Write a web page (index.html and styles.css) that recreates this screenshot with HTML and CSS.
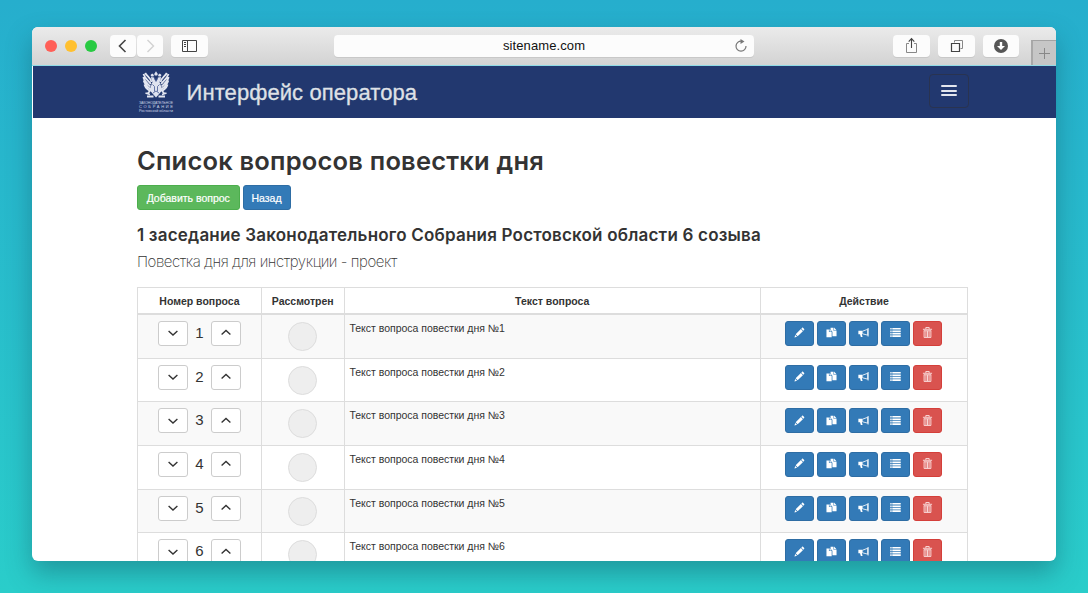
FILE: index.html
```html
<!DOCTYPE html>
<html lang="ru">
<head>
<meta charset="utf-8">
<title>Интерфейс оператора</title>
<link rel="stylesheet" href="styles.css">
</head>
<body>
<svg class="sprite" width="0" height="0" aria-hidden="true">
  <symbol id="down" viewBox="0 0 12 12"><path d="M1.600 4l4.400 4 4.400-4" fill="none" stroke="#333" stroke-width="1.4"/></symbol>
  <symbol id="up" viewBox="0 0 12 12"><path d="M1.600 7.500l4.400-4 4.400 4" fill="none" stroke="#333" stroke-width="1.4"/></symbol>
  <symbol id="pencil" viewBox="0 0 12 12"><path d="M.5 11.500l.8-2.800 2 2zM1.800 8l5.700-5.700 2.200 2.200L4 10.200zM8 1.800l.9-.9c.3-.3.6-.3.9 0L11.100 2.200c.3.3.3.6 0 .9l-.9.9z" fill="#fff"/></symbol>
  <symbol id="copy" viewBox="0 0 12 12"><path d="M.5 2.600h2.700v2.900h3V11.300H.5zM3.800 2.200l2.300 2.600H3.800zM5 .8h3.200v3.400h3.300V10H7V5.200L5 3zM8.800.6l2.700 2.900H8.800z" fill="#fff"/></symbol>
  <symbol id="horn" viewBox="0 0 12 12"><path d="M.4 4.200h4v3.600h-.2l.8 3H3.100L2.200 7.800H.4zM10.500 1.200h1v9.200h-1z" fill="#fff"/><path d="M4.600 4.700L10.600 2.500v6.400L4.600 7.300z" fill="none" stroke="#fff" stroke-width=".9"/></symbol>
  <symbol id="list" viewBox="0 0 12 12"><path d="M.3 1h1.500v1.800H.3zM2.500 1h9.200v1.800H2.500zM.3 3.700h1.500v1.800H.3zM2.500 3.700h9.200v1.800H2.500zM.3 6.400h1.500v1.800H.3zM2.500 6.400h9.200v1.800H2.500zM.3 9.100h1.500v1.800H.3zM2.500 9.100h9.200v1.800H2.500z" fill="#fff"/></symbol>
  <symbol id="trash" viewBox="0 0 12 12"><path d="M1 2.500h10M4.200 2.100V.5h3.600v1.600M2.300 4v7.400h7.400V4M4.300 4.400v6.600M6 4.400v6.600M7.700 4.400v6.600M2 4.100h8" fill="none" stroke="#fbe3e2" stroke-width="1"/></symbol>
</svg>

<div class="window">
  <div class="toolbar">
    <span class="dot red"></span><span class="dot yellow"></span><span class="dot green"></span>
    <div class="tool back"><svg width="26" height="22"><path d="M15.500 5l-6 6 6 6" fill="none" stroke="#444" stroke-width="1.6"/></svg></div>
    <div class="tool forward"><svg width="26" height="22"><path d="M10.500 5l6 6-6 6" fill="none" stroke="#d2d2d2" stroke-width="1.4"/></svg></div>
    <div class="tool sidebar"><svg width="37" height="22"><path d="M11.500 5.500h14v11h-14zM16.500 5.500v11M13 7.500h2M13 9.500h2M13 11.500h2" fill="none" stroke="#444"/></svg></div>
    <div class="address"><span class="url">sitename.com</span>
      <svg class="reload" width="14" height="14"><path d="M7.500 2.200A5 5 0 1 0 12 7" fill="none" stroke="#777" stroke-width="1.2"/><path d="M6.500 0l4 2.500-4 2.400z" fill="#777"/></svg>
    </div>
    <div class="tool share"><svg width="37" height="22"><path d="M16 8.500h-2.500v9h10v-9H21" fill="none" stroke="#888"/><path d="M18.500 13V4M15.700 6.600l2.800-3 2.800 3" fill="none" stroke="#444" stroke-width="1.1"/></svg></div>
    <div class="tool tabs"><svg width="37" height="22"><path d="M16.500 7.500v-2h8v8h-2" fill="none" stroke="#888"/><path d="M13.500 8.500h8v8h-8z" fill="none" stroke="#444" stroke-width="1.2"/></svg></div>
    <div class="tool download"><svg width="36" height="22"><circle cx="18" cy="11" r="7" fill="#555"/><path d="M16.800 7h2.400v4H22l-4 4-4-4h2.800z" fill="#fff"/></svg></div>
    <div class="newtab"><svg width="24" height="24"><path d="M11.500 7v11M6 12.500h11" stroke="#888" fill="none"/></svg></div>
  </div>

  <div class="navbar">
    <div class="crest">
      <svg width="28" height="28" viewBox="0 0 28 28">
        <g fill="#dfe3ef"><path d="M12.200 3l1.800-2.700L15.800 3l-.6 1.500h-2.400zM8.500 4l1.700-1.500L12 4l-.6 1.500H9.300zM16 4l1.800-1.500L19.500 4l-.8 1.500h-2.100z"/>
        <path d="M9 6l3 .5 1 3h2l1-3 3-.5-.5 3-1 2 3 8-3 3.500-3.500 4-3.500-4-3-3.500 3-8-1-2z"/></g>
        <path d="M9.500 11C9 7 5 5.500 3.200 2M8.800 13C7 10 3 8 1.500 3M8.400 15.500C6 13 2.300 11 1.400 6M8.400 18C5.600 16 3 14 1.700 9.500M8.200 20C6.400 19 3.600 17.500 2.500 13.500M18.500 11c.5-4 4.500-5.500 6.300-9M19.200 13c1.800-3 5.800-5 7.300-10M19.600 15.500c2.400-2.500 6.100-4.500 7-9.500M19.600 18c2.800-2 5.400-4 6.700-8.500M19.800 20c1.800-1 4.600-2.500 5.700-6.500M8.500 19l-3 4M19.500 19l3 4M3.500 22l4.500 1.500M24.500 22L20 23.500M5 25.500h6.500M16.500 25.500H23" stroke="#e3e6f0" stroke-width="1.800" fill="none"/>
        <path d="M12.500 6.500l1.500 4 1.500-4M10.500 13.500l2 2v5M17.500 13.500l-2 2v5M11 22l3-2 3 2" stroke="#465a93" stroke-width=".8" fill="none"/>
      </svg>
      <svg class="motto" width="39" height="18" viewBox="0 0 39 18">
        <text x="2" y="7.300" textLength="34" lengthAdjust="spacingAndGlyphs">ЗАКОНОДАТЕЛЬНОЕ</text>
        <text x="2" y="11.300" textLength="34">СОБРАНИЕ</text>
        <text x="2" y="14.800" textLength="34" lengthAdjust="spacingAndGlyphs">Ростовской области</text>
      </svg>
    </div>
    <span class="brand">Интерфейс оператора</span>
    <div class="burger"><i></i><i></i><i></i></div>
  </div>

  <div class="page">
    <h1>Список вопросов повестки дня</h1>
    <div class="actions"><span class="btn add">Добавить вопрос</span><span class="btn return">Назад</span></div>
    <h2>1 заседание Законодательного Собрания Ростовской области 6 созыва</h2>
    <p class="lead">Повестка дня для инструкции - проект</p>

    <div class="table">
      <div class="row head"><div>Номер вопроса</div><div>Рассмотрен</div><div>Текст вопроса</div><div>Действие</div></div>
      <div class="row odd">
        <div class="order"><b class="step"><svg><use href="#down"/></svg></b><span>1</span><b class="step"><svg><use href="#up"/></svg></b></div>
        <div class="state"><i></i></div><div class="text">Текст вопроса повестки дня №1</div>
        <div class="tools"><b><svg><use href="#pencil"/></svg></b><b><svg><use href="#copy"/></svg></b><b><svg><use href="#horn"/></svg></b><b><svg><use href="#list"/></svg></b><b class="danger"><svg><use href="#trash"/></svg></b></div>
      </div>
      <div class="row">
        <div class="order"><b class="step"><svg><use href="#down"/></svg></b><span>2</span><b class="step"><svg><use href="#up"/></svg></b></div>
        <div class="state"><i></i></div><div class="text">Текст вопроса повестки дня №2</div>
        <div class="tools"><b><svg><use href="#pencil"/></svg></b><b><svg><use href="#copy"/></svg></b><b><svg><use href="#horn"/></svg></b><b><svg><use href="#list"/></svg></b><b class="danger"><svg><use href="#trash"/></svg></b></div>
      </div>
      <div class="row odd">
        <div class="order"><b class="step"><svg><use href="#down"/></svg></b><span>3</span><b class="step"><svg><use href="#up"/></svg></b></div>
        <div class="state"><i></i></div><div class="text">Текст вопроса повестки дня №3</div>
        <div class="tools"><b><svg><use href="#pencil"/></svg></b><b><svg><use href="#copy"/></svg></b><b><svg><use href="#horn"/></svg></b><b><svg><use href="#list"/></svg></b><b class="danger"><svg><use href="#trash"/></svg></b></div>
      </div>
      <div class="row">
        <div class="order"><b class="step"><svg><use href="#down"/></svg></b><span>4</span><b class="step"><svg><use href="#up"/></svg></b></div>
        <div class="state"><i></i></div><div class="text">Текст вопроса повестки дня №4</div>
        <div class="tools"><b><svg><use href="#pencil"/></svg></b><b><svg><use href="#copy"/></svg></b><b><svg><use href="#horn"/></svg></b><b><svg><use href="#list"/></svg></b><b class="danger"><svg><use href="#trash"/></svg></b></div>
      </div>
      <div class="row odd">
        <div class="order"><b class="step"><svg><use href="#down"/></svg></b><span>5</span><b class="step"><svg><use href="#up"/></svg></b></div>
        <div class="state"><i></i></div><div class="text">Текст вопроса повестки дня №5</div>
        <div class="tools"><b><svg><use href="#pencil"/></svg></b><b><svg><use href="#copy"/></svg></b><b><svg><use href="#horn"/></svg></b><b><svg><use href="#list"/></svg></b><b class="danger"><svg><use href="#trash"/></svg></b></div>
      </div>
      <div class="row">
        <div class="order"><b class="step"><svg><use href="#down"/></svg></b><span>6</span><b class="step"><svg><use href="#up"/></svg></b></div>
        <div class="state"><i></i></div><div class="text">Текст вопроса повестки дня №6</div>
        <div class="tools"><b><svg><use href="#pencil"/></svg></b><b><svg><use href="#copy"/></svg></b><b><svg><use href="#horn"/></svg></b><b><svg><use href="#list"/></svg></b><b class="danger"><svg><use href="#trash"/></svg></b></div>
      </div>
    </div>
  </div>
</div>
</body>
</html>
```

FILE: styles.css
```css
* { box-sizing: border-box; }
body {
  margin: 0;
  height: 593px;
  padding: 27px 32px 32px;
  overflow: hidden;
  background: linear-gradient(#26aecd, #2acdca);
  font-family: "Liberation Sans", Arial, sans-serif;
  color: #333;
}
svg { display: block; }
.sprite { position: absolute; }
.window {
  height: 534px;
  border-radius: 6px;
  overflow: hidden;
  background: #fff;
  box-shadow: 0 12px 26px rgba(20, 80, 95, .42);
}

.toolbar {
  display: flex;
  align-items: center;
  height: 39px;
  padding-left: 13px;
  background: linear-gradient(#ebebeb, #d3d3d3);
  border-bottom: 1px solid #8fdbe6;
}
.dot { flex: none; width: 12px; height: 12px; margin-right: 8px; border-radius: 50%; }
.red { background: #ff5f57; }
.yellow { background: #ffc02f; }
.green { background: #28ca42; }
.tool {
  flex: none;
  height: 22px;
  background: #fcfcfc;
  border-radius: 4px;
  box-shadow: 0 1px 0 #c8c8c8;
}
.back { width: 26px; margin-left: 5px; }
.forward { width: 26px; margin-left: 1px; }
.sidebar { width: 37px; margin-left: 8px; }
.address {
  display: flex;
  align-items: center;
  width: 420px;
  height: 22px;
  margin-left: 126px;
  padding-right: 6px;
  background: #fcfcfc;
  border-radius: 4px;
  box-shadow: 0 1px 0 #c8c8c8;
}
.url { flex: 1; padding-left: 20px; text-align: center; font-size: 13px; line-height: 22px; letter-spacing: .1px; color: #111; }
.share { width: 37px; margin-left: 139px; }
.tabs { width: 37px; margin-left: 8px; }
.download { width: 36px; margin-left: 8px; }
.newtab {
  flex: none;
  align-self: flex-end;
  width: 25px;
  height: 25px;
  margin-left: 12px;
  background: #c6c6c6;
  border-top: 1px solid #a3a3a3;
  border-left: 2px solid #a8a8a8;
}

.navbar {
  display: flex;
  height: 52px;
  margin-left: 1px;
  padding-left: 103.500px;
  background: #22386f;
}
.crest { display: flex; flex-direction: column; align-items: center; width: 39px; padding-top: 5px; }
.motto { margin-top: -2px; overflow: visible; font-size: 4px; fill: #ced5e6; }
.brand { width: 240px; margin-left: 11px; font-size: 22px; letter-spacing: .09px; line-height: 53px; color: #dfe1e6; -webkit-text-stroke: .3px #dfe1e6; white-space: nowrap; }
.burger {
  display: flex;
  flex-direction: column;
  align-items: center;
  gap: 2.500px;
  width: 40px;
  height: 34px;
  margin: 8px 0 0 502px;
  padding-top: 10px;
  border: 1px solid #293350;
  border-radius: 4px;
}
.burger i { width: 16px; height: 2px; background: #e3e6ee; border-radius: 1px; }

.page { width: 936px; padding: 26px 0 0 105px; }
h1, h2, .lead { font-family: Inter, "Liberation Sans", sans-serif; white-space: nowrap; }
h1 { margin: 0; height: 41px; font-size: 25.500px; line-height: 34px; font-weight: 560; letter-spacing: .2px; }
.actions { display: flex; gap: 3px; }
.btn {
  height: 25px;
  border: 1px solid #4cae4c;
  border-radius: 3px;
  background: #5cb85c;
  color: #fff;
  font-size: 10.500px;
  line-height: 24px;
  text-align: center;
  white-space: nowrap;
  -webkit-text-stroke: .2px #fff;
}
.add { width: 102.500px; }
.return { width: 48px; background: #337ab7; border-color: #2e6da4; }
h2 { margin: 12px 0 0; font-size: 17px; line-height: 26px; font-weight: 600; letter-spacing: .2px; }
.lead { margin: 2px 0 0; font-size: 15px; line-height: 24px; font-weight: 200; letter-spacing: -.46px; }

.table { margin-top: 12.500px; border: 1px solid #ddd; border-bottom: 0; }
.row { display: grid; grid-template-columns: 123px 82.500px 416.500px 1fr; height: 43.700px; border-bottom: 1px solid #ddd; }
.row > div { border-left: 1px solid #ddd; }
.row > div:first-child { border-left: 0; }
.head { height: 27.400px; border-bottom: 2px solid #ddd; font-size: 10.500px; font-weight: bold; line-height: 26px; text-align: center; }
.odd { background: #f9f9f9; }
.order { display: flex; justify-content: center; padding-top: 6px; font-size: 15px; }
.order span { width: 23px; line-height: 23px; text-align: center; }
.step { width: 30px; height: 25px; padding: 5.500px 8px; background: #fff; border: 1px solid #ccc; border-radius: 3px; }
.step svg { width: 12px; height: 12px; }
.state { padding: 7px 0 0 26px; }
.state i { display: block; width: 29px; height: 29px; border: 1px solid #ddd; border-radius: 50%; background: #eee; }
.text { padding: 6px 0 0 5px; font-size: 10.500px; line-height: 14px; letter-spacing: -.02px; white-space: nowrap; }
.tools { display: flex; gap: 3px; padding: 6px 0 0 24.200px; }
.tools b { width: 29px; height: 25px; padding: 5.500px 8px; background: #337ab7; border: 1px solid #2e6da4; border-radius: 3px; }
.tools .danger { background: #d9534f; border-color: #d43f3a; }
.tools svg { width: 11px; height: 11px; }
```
